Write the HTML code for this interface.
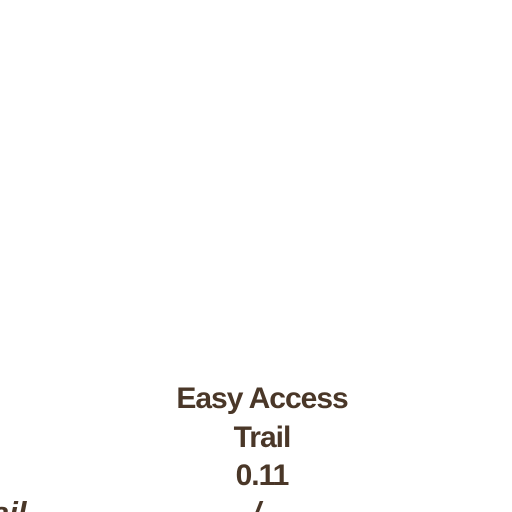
<!DOCTYPE html>
<html><head><style>
html,body{margin:0;padding:0;background:#fff;width:512px;height:512px;overflow:hidden;position:relative}
.t{position:absolute;left:0;width:524px;text-align:center;font-family:"Liberation Sans",sans-serif;font-weight:bold;font-size:30px;color:#4a3728;letter-spacing:-1px;line-height:38px}
.i{position:absolute;font-family:"Liberation Sans",sans-serif;font-weight:bold;font-style:italic;font-size:31px;color:#4a3728;line-height:38px}
</style></head><body>
<div class="t" style="top:380px">Easy Access</div>
<div class="t" style="top:419px">Trail</div>
<div class="t" style="top:457px">0.11</div>
<div class="i" style="top:494px;left:-8px">ail</div>
<div class="i" style="top:494px;left:252px">/</div>
</body></html>
